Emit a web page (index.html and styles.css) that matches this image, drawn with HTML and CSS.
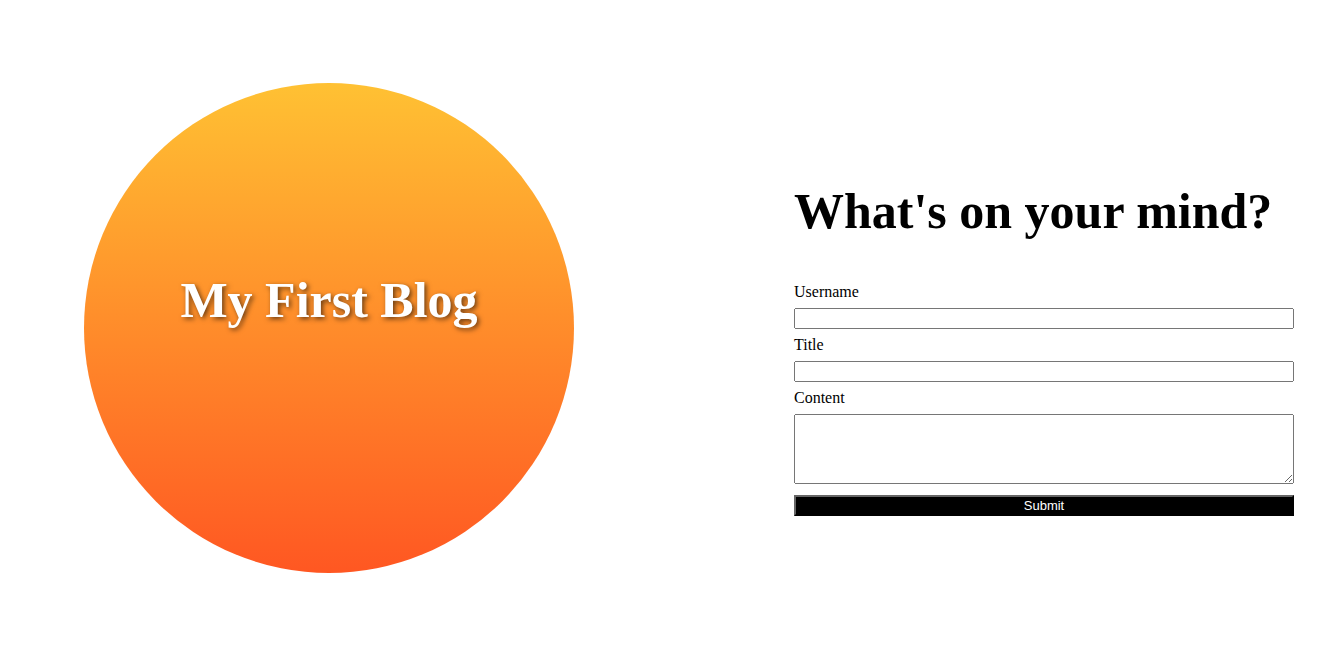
FILE: index.html
```html
<!DOCTYPE html>
<html lang="en">
<head>
    <meta charset="UTF-8">
    <meta name="viewport" content="width=device-width, initial-scale=1.0">
    <title>My First Blog</title>
    <link rel="stylesheet" href="styles.css">
</head>
<body>
    <div class="page">
        <div class="logo">
            <h1>My First Blog</h1>
        </div>
        <div class="post">
            <h2>What's on your mind?</h2>
            <form id="postForm">
                <label for="username">Username</label>
                <input type="text" id="username">
                <label for="title">Title</label>
                <input type="text" id="title">
                <label for="content">Content</label>
                <textarea id="content"></textarea>
                <button type="submit">Submit</button>
            </form>
        </div>
    </div>
</body>
</html>
```

FILE: styles.css
```css
* {
    box-sizing: border-box;
}

body {
    margin: 0;
    font-family: 'Liberation Serif', 'Times New Roman', serif;
    background-color: white;
}

.page {
    display: flex;
    align-items: center;
    justify-content: space-between;
    min-height: 100vh;
    padding: 0 39px 12px 84px;
}

.logo {
    width: 490px;
    height: 490px;
    border-radius: 50%;
    background: linear-gradient(to bottom, #ffc133, #ff5722);
    display: flex;
    justify-content: center;
    align-items: center;
    padding-bottom: 56px;
}

.logo h1 {
    margin: 0;
    font-size: 50px;
    font-weight: 700;
    color: white;
    text-shadow: 2px 2px 5px rgba(0, 0, 0, 0.6);
}

.post {
    width: 500px;
    align-self: flex-start;
    margin-top: 182px;
}

.post h2 {
    font-size: 50px;
    font-weight: 700;
    margin: 0 0 43px;
}

form label {
    display: block;
    font-size: 16px;
    margin-bottom: 7px;
}

form input,
form textarea {
    display: block;
    width: 100%;
    margin: 0 0 7px;
    height: 21px;
}

form textarea {
    height: 70px;
    margin-bottom: 11px;
}

form button {
    display: block;
    width: 100%;
    height: 21px;
    background-color: black;
    color: white;
    font-family: 'Liberation Sans', Arial, sans-serif;
    font-size: 13px;
    border: 2px solid black;
    border-top-color: #666;
    border-left-color: #666;
    padding: 0;
}
```
